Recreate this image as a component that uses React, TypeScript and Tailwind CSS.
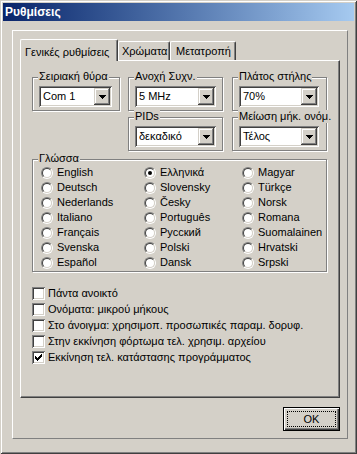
import React from 'react';

const SUNKEN =
  'shadow-[inset_1px_1px_0_#808080,inset_-1px_-1px_0_#ffffff,inset_2px_2px_0_#404040,inset_-2px_-2px_0_#d4d0c8]';
const RAISED =
  'shadow-[inset_-1px_-1px_0_#404040,inset_1px_1px_0_#d4d0c8,inset_-2px_-2px_0_#808080,inset_2px_2px_0_#ffffff]';

function Combo({ value, width }: { value: string; width: string }) {
  return (
    <div className={`flex h-[21px] bg-white p-[2px] ${SUNKEN} ${width}`}>
      <span className="flex-1 pl-[2px] text-[11px] leading-[17px] whitespace-nowrap overflow-hidden">{value}</span>
      <div className={`flex h-[17px] w-[16px] items-center justify-center bg-[#d4d0c8] ${RAISED}`}>
        <svg width="7" height="4" shapeRendering="crispEdges">
          <rect x="0" y="0" width="7" height="1" fill="#000" />
          <rect x="1" y="1" width="5" height="1" fill="#000" />
          <rect x="2" y="2" width="3" height="1" fill="#000" />
          <rect x="3" y="3" width="1" height="1" fill="#000" />
        </svg>
      </div>
    </div>
  );
}

function Group({ label, className, children }: { label: string; className: string; children?: React.ReactNode }) {
  return (
    <div className={`relative border border-[#808080] shadow-[inset_1px_1px_0_#ffffff,1px_1px_0_#ffffff] ${className}`}>
      <span className="absolute -top-[8px] left-[5px] bg-[#d4d0c8] px-[1px] text-[11px] leading-[13px] whitespace-nowrap">
        {label}
      </span>
      {children}
    </div>
  );
}

function Radio({ checked }: { checked?: boolean }) {
  return (
    <span className="inline-block h-[12px] w-[12px] shrink-0 rounded-full border border-t-[#808080] border-l-[#808080] border-r-white border-b-white">
      <span className="flex h-full w-full items-center justify-center rounded-full border border-t-[#404040] border-l-[#404040] border-r-[#d4d0c8] border-b-[#d4d0c8] bg-white">
        {checked && <span className="h-[4px] w-[4px] rounded-full bg-black" />}
      </span>
    </span>
  );
}

function Check({ checked }: { checked?: boolean }) {
  const cols = [2, 3, 4, 3, 2, 1, 0];
  return (
    <span className={`flex h-[13px] w-[13px] shrink-0 items-center justify-center bg-white ${SUNKEN}`}>
      {checked && (
        <svg width="7" height="7" shapeRendering="crispEdges">
          {cols.map((y, x) => (
            <rect key={x} x={x} y={y} width="1" height="3" fill="#000" />
          ))}
        </svg>
      )}
    </span>
  );
}

const languages = [
  ['English', 'Ελληνικά', 'Magyar'],
  ['Deutsch', 'Slovensky', 'Türkçe'],
  ['Nederlands', 'Česky', 'Norsk'],
  ['Italiano', 'Português', 'Romana'],
  ['Français', 'Русский', 'Suomalainen'],
  ['Svenska', 'Polski', 'Hrvatski'],
  ['Español', 'Dansk', 'Srpski'],
];

const options = [
  { label: 'Πάντα ανοικτό', checked: false },
  { label: 'Ονόματα: μικρού μήκους', checked: false },
  { label: 'Στο άνοιγμα: χρησιμοπ. προσωπικές παραμ. δορυφ.', checked: false },
  { label: 'Στην εκκίνηση φόρτωμα τελ. χρησιμ. αρχείου', checked: false },
  { label: 'Εκκίνηση τελ. κατάστασης προγράμματος', checked: true },
];

export default function App() {
  return (
    <div
      className="h-[454px] w-[357px] bg-[#d4d0c8] p-[3px] text-[11px] text-black font-['Liberation_Sans',Arial,sans-serif] shadow-[inset_1px_1px_0_#d4d0c8,inset_-1px_-1px_0_#404040,inset_2px_2px_0_#ffffff,inset_-2px_-2px_0_#808080]"
    >
      {/* title bar */}
      <div className="flex h-[18px] items-center bg-linear-to-r from-[#0a246a] to-[#a6caf0] pl-[2px]">
        <span className="text-[12px] font-bold text-white">Ρυθμίσεις</span>
      </div>

      {/* outer panel */}
      <div className="ml-[9px] mt-[9px] h-[409px] w-[336px] border border-t-white border-l-white border-r-[#808080] border-b-[#808080] pl-[7px] pt-[8px]">
        {/* tabs */}
        <div className="flex h-[21px] items-end">
          <div className="relative z-10 -mb-[1px] flex h-[22px] w-[98px] items-start rounded-t-[2px] border-l border-t border-r border-l-white border-t-white border-r-[#404040] bg-[#d4d0c8] pl-[4px] pt-[4px] shadow-[inset_-1px_0_0_#808080]">
            Γενικές ρυθμίσεις
          </div>
          <div className="flex h-[19px] w-[52px] items-center rounded-t-[2px] border-l border-t border-r border-l-white border-t-white border-r-[#404040] pl-[3px] shadow-[inset_-1px_0_0_#808080]">
            Χρώματα
          </div>
          <div className="flex h-[19px] w-[66px] items-center rounded-t-[2px] border-l border-t border-r border-l-white border-t-white border-r-[#404040] pl-[5px] shadow-[inset_-1px_0_0_#808080]">
            Μετατροπή
          </div>
        </div>

        {/* tab body */}
        <div className="h-[338px] w-[320px] border border-t-white border-l-white border-r-[#404040] border-b-[#404040] pl-[11px] pt-[16px] shadow-[inset_-1px_-1px_0_#808080]">
          <div className="flex">
            <Group label="Σειριακή θύρα" className="h-[34px] w-[88px] pl-[6px] pt-[8px]">
              <Combo value="Com 1" width="w-[73px]" />
            </Group>
            <Group label="Ανοχή Συχν." className="ml-[8px] h-[34px] w-[95px] pl-[6px] pt-[8px]">
              <Combo value="5 MHz" width="w-[81px]" />
            </Group>
            <Group label="Πλάτος στήλης" className="ml-[9px] h-[34px] w-[95px] pl-[6px] pt-[8px]">
              <Combo value="70%" width="w-[80px]" />
            </Group>
          </div>

          <div className="ml-[96px] mt-[6px] flex">
            <Group label="PIDs" className="h-[34px] w-[95px] pl-[6px] pt-[8px]">
              <Combo value="δεκαδικό" width="w-[81px]" />
            </Group>
            <Group label="Μείωση μήκ. ονόμ." className="ml-[9px] h-[34px] w-[95px] pl-[6px] pt-[8px]">
              <Combo value="Τέλος" width="w-[80px]" />
            </Group>
          </div>

          <Group label="Γλώσσα" className="mt-[8px] h-[113px] w-[295px] pl-[8px] pt-[5px]">
            <div className="grid grid-cols-[103px_98px_1fr]">
              {languages.flat().map((lang) => (
                <div key={lang} className="flex h-[15px] items-center gap-[4px]">
                  <Radio checked={lang === 'Ελληνικά'} />
                  <span className="leading-[13px]">{lang}</span>
                </div>
              ))}
            </div>
          </Group>

          <div className="mt-[13px] flex flex-col">
            {options.map((o) => (
              <div key={o.label} className="flex h-[16px] items-center gap-[3px]">
                <Check checked={o.checked} />
                <span className="leading-[13px] whitespace-nowrap">{o.label}</span>
              </div>
            ))}
          </div>
        </div>

        {/* OK button */}
        <div className="mt-[9px] flex w-[320px] justify-end">
          <div className="h-[24px] w-[57px] border border-black bg-[#d4d0c8]">
            <div className="h-full w-full p-[3px] shadow-[inset_1px_1px_0_#ffffff,inset_-1px_-1px_0_#404040,inset_-2px_-2px_0_#808080]">
              <div className="flex h-full w-full items-center justify-center border border-dotted border-black">OK</div>
            </div>
          </div>
        </div>
      </div>
    </div>
  );
}
